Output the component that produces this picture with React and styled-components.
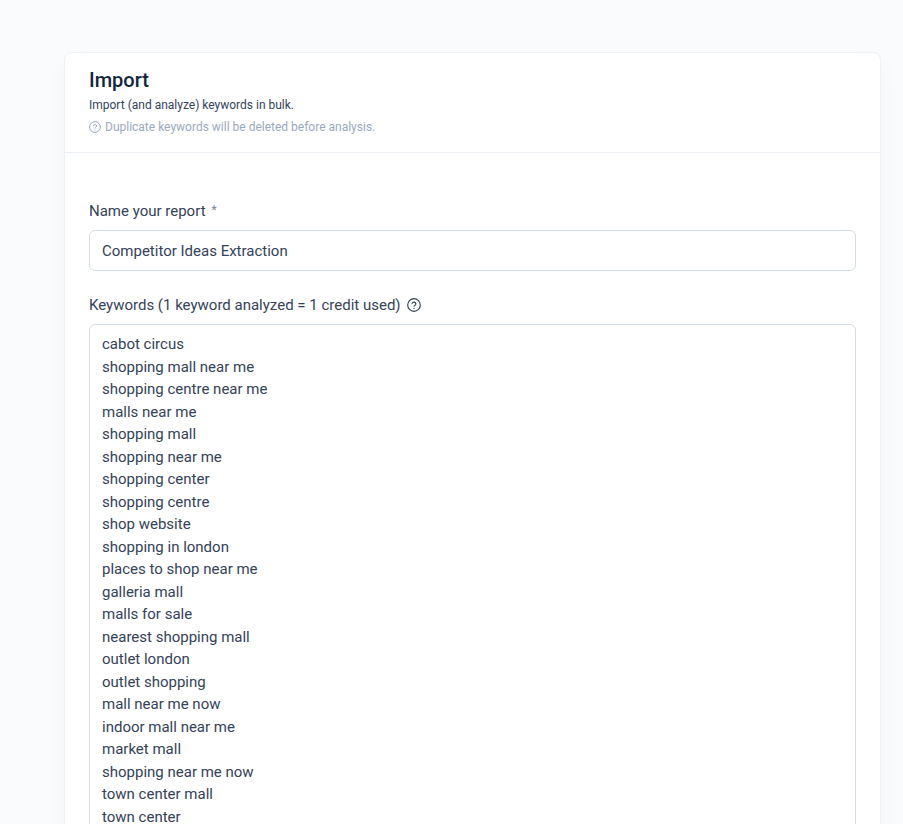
import React, { useState } from "react";
import styled, { createGlobalStyle } from "styled-components";

const defaultKeywords = [
  "cabot circus",
  "shopping mall near me",
  "shopping centre near me",
  "malls near me",
  "shopping mall",
  "shopping near me",
  "shopping center",
  "shopping centre",
  "shop website",
  "shopping in london",
  "places to shop near me",
  "galleria mall",
  "malls for sale",
  "nearest shopping mall",
  "outlet london",
  "outlet shopping",
  "mall near me now",
  "indoor mall near me",
  "market mall",
  "shopping near me now",
  "town center mall",
  "town center",
];

const HelpIcon = ({ size }) => (
  <Icon width={size} height={size} viewBox="0 0 24 24" aria-hidden="true">
    <circle cx="12" cy="12" r="10.8" />
    <path d="M8.8 9.2a3.3 3.3 0 0 1 6.4 1c0 2.1-3.2 2.6-3.2 4" />
    <path d="M12 17.8h.01" />
  </Icon>
);

const App = () => {
  const [name, setName] = useState("Competitor Ideas Extraction");
  const [keywords, setKeywords] = useState(defaultKeywords.join("\n"));

  return (
    <Page>
      <GlobalStyle />
      <Card>
        <CardHeader>
          <Title>Import</Title>
          <Subtitle>Import (and analyze) keywords in bulk.</Subtitle>
          <Hint>
            <HelpIcon size={12} />
            Duplicate keywords will be deleted before analysis.
          </Hint>
        </CardHeader>
        <CardBody>
          <Field>
            <Label htmlFor="report-name">
              Name your report <Required>*</Required>
            </Label>
            <Input
              id="report-name"
              value={name}
              onChange={(e) => setName(e.target.value)}
            />
          </Field>
          <Field>
            <Label htmlFor="keywords">
              Keywords (1 keyword analyzed = 1 credit used)
              <HelpIcon size={14} />
            </Label>
            <TextArea
              id="keywords"
              rows={22}
              spellCheck={false}
              value={keywords}
              onChange={(e) => setKeywords(e.target.value)}
            />
          </Field>
        </CardBody>
      </Card>
    </Page>
  );
};

const GlobalStyle = createGlobalStyle`
  * {
    box-sizing: border-box;
  }

  body {
    margin: 0;
    background-color: #f9fbfd;
    color: #344258;
    font-family: Roboto, "Liberation Sans", sans-serif;
    font-size: 15px;
  }
`;

const Page = styled.main`
  padding: 52px 22px 32px 64px;
`;

const Card = styled.section`
  background-color: white;
  border: 1px solid #edf2f6;
  border-radius: 8px;
  box-shadow: 0 12px 24px rgba(18, 38, 63, 0.03);
`;

const CardHeader = styled.header`
  padding: 14px 24px 15px;
  border-bottom: 1px solid #edf0f4;
`;

const Title = styled.h1`
  margin: 0;
  color: #12263f;
  font-size: 20px;
  font-weight: 500;
  line-height: 26px;
`;

const Subtitle = styled.p`
  margin: 0;
  font-size: 12px;
  line-height: 24px;
`;

const Hint = styled.p`
  display: flex;
  align-items: center;
  gap: 4px;
  margin: 0;
  color: #9aa9c0;
  font-size: 12px;
  line-height: 20px;
`;

const CardBody = styled.div`
  display: flex;
  flex-direction: column;
  gap: 23px;
  padding: 47px 24px 24px;
`;

const Field = styled.div`
  display: flex;
  flex-direction: column;
  gap: 8px;
`;

const Label = styled.label`
  display: flex;
  align-items: center;
  gap: 6px;
  line-height: 22px;
`;

const Required = styled.span`
  align-self: flex-start;
  color: #7d8594;
  font-size: 12px;
  line-height: 20px;
`;

const Input = styled.input`
  width: 100%;
  height: 41px;
  padding: 8px 12px;
  border: 1px solid #d2dde6;
  border-radius: 6px;
  background-color: white;
  color: inherit;
  font: inherit;
  outline: none;

  &:focus {
    border-color: #2c7be5;
  }
`;

const TextArea = styled(Input).attrs({ as: "textarea" })`
  display: block;
  height: auto;
  line-height: 1.5;
  resize: vertical;
`;

const Icon = styled.svg`
  flex: none;
  fill: none;
  stroke: currentColor;
  stroke-width: 2;
  stroke-linecap: round;
  stroke-linejoin: round;
`;

export default App;
